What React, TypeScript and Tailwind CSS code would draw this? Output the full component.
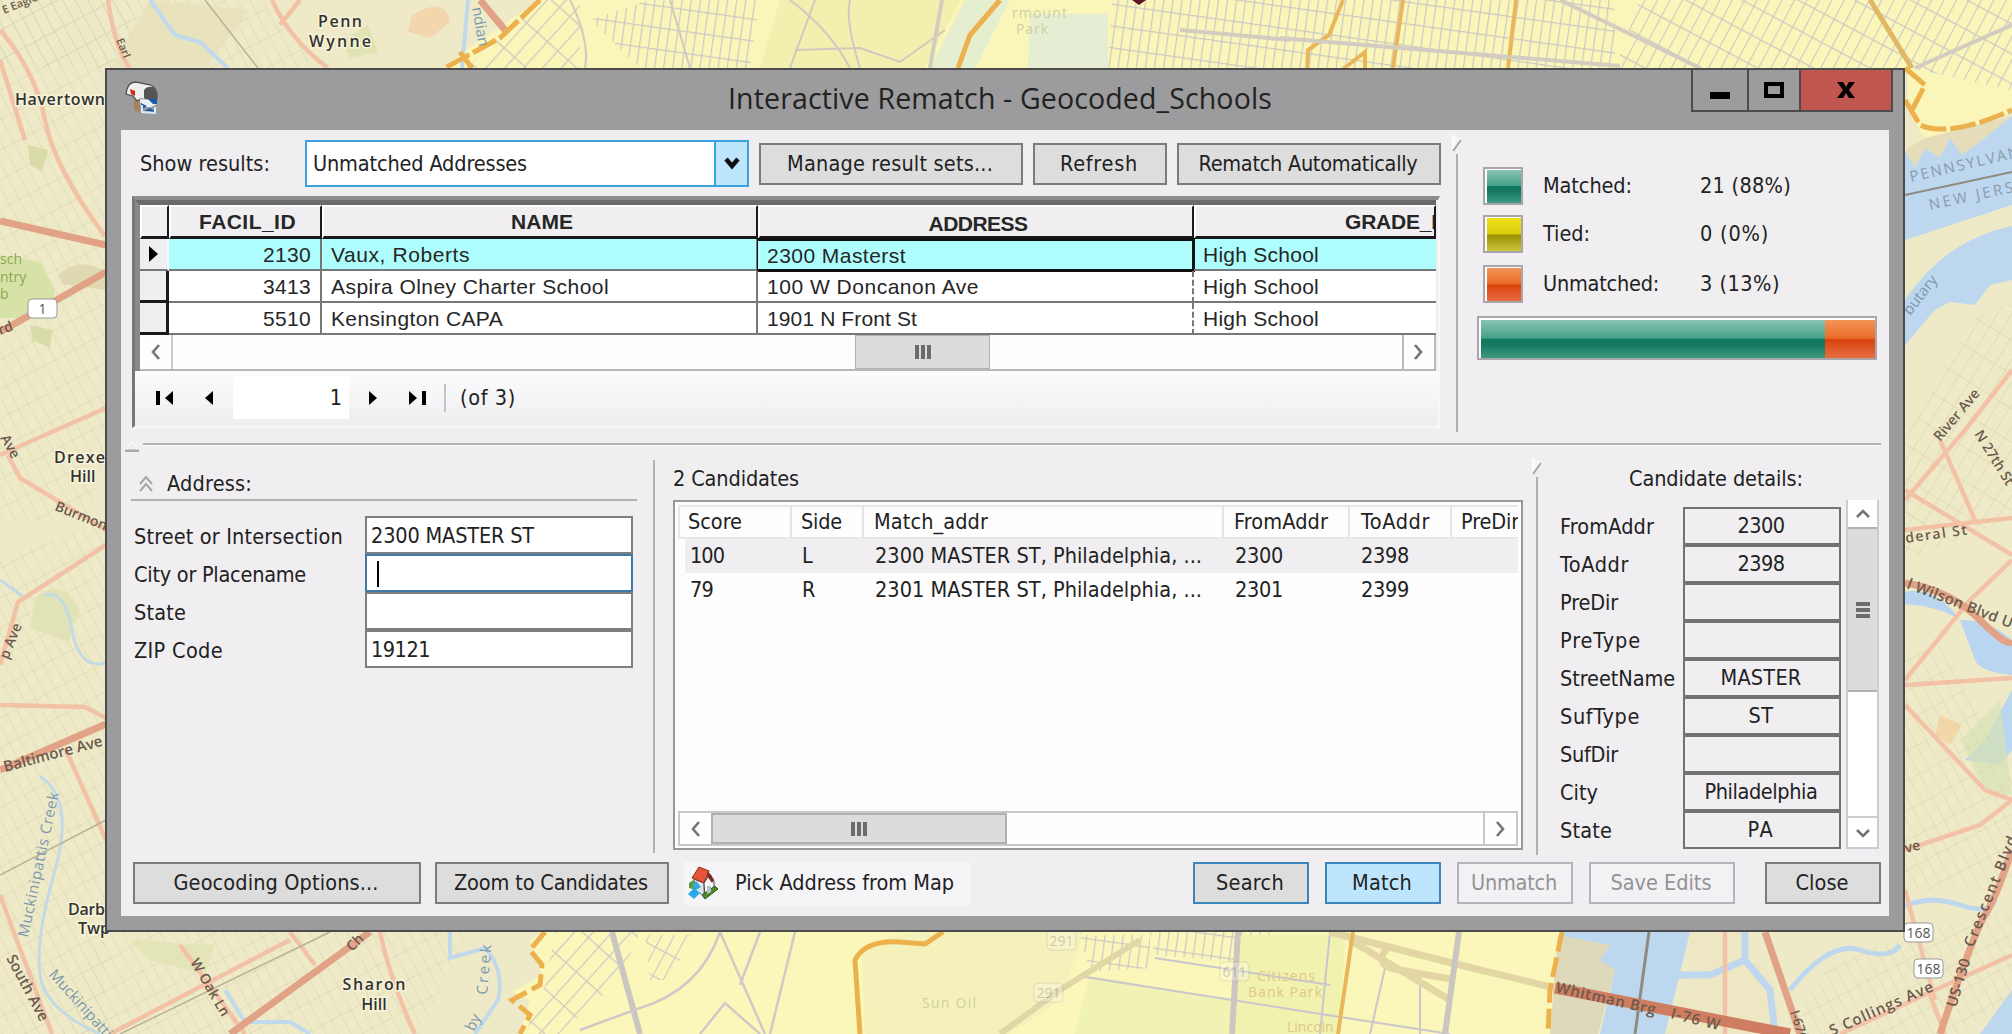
import { useLayoutEffect, useRef } from "react";
import type { ReactNode } from "react";

/* Text run whose tracking is adjusted so that it fills a known width. */
function Fit({ w, children, className = "" }: { w: number; children: string; className?: string }) {
  const ref = useRef<HTMLSpanElement>(null);
  useLayoutEffect(() => {
    const el = ref.current;
    if (!el) return;
    el.style.letterSpacing = "0px";
    const natural = el.getBoundingClientRect().width;
    el.style.letterSpacing = `${(w - natural) / children.length}px`;
  }, [w, children]);
  return (
    <span ref={ref} className={`inline-block shrink-0 whitespace-pre ${className}`}>
      {children}
    </span>
  );
}

const label = "font-['Open_Sans',sans-serif] text-[11px] font-semibold fill-[#6b5a4c]";

function StreetPattern({ id, size, angle, color, w = 1 }: { id: string; size: number; angle: number; color: string; w?: number }) {
  return (
    <pattern id={id} width={size} height={size * 2.4} patternUnits="userSpaceOnUse" patternTransform={`rotate(${angle})`}>
      <path d={`M0 0V${size * 2.4}M0 0H${size}`} stroke={color} strokeWidth={w} fill="none" />
    </pattern>
  );
}

function Shield({ x, y, t }: { x: number; y: number; t: string }) {
  return (
    <g>
      <rect x={x} y={y} width="29" height="19" rx="4" fill="#fff" stroke="#999" />
      <text x={x + 14.5} y={y + 15} textAnchor="middle" className="font-['Open_Sans',sans-serif] text-[14px] fill-[#555]">{t}</text>
    </g>
  );
}

function MapBackground() {
  return (
    <svg className="absolute inset-0" width="2012" height="1034" viewBox="0 0 2012 1034">
      <defs>
        <StreetPattern id="s1" size={11} angle={-28} color="#d6d3af" />
        <StreetPattern id="s2" size={12} angle={32} color="#d3d0aa" />
        <StreetPattern id="s3" size={9} angle={8} color="#cbc8c4" w={2.4} />
        <StreetPattern id="s4" size={14} angle={42} color="#cbc8c4" w={2.4} />
        <StreetPattern id="s5" size={11} angle={28} color="#cbc8c4" w={2.2} />
      </defs>
      <rect width="2012" height="1034" fill="#eeeac8" />
      <path d="M0 0H130V330L90 520H0zM0 560L106 520V1034H0z" fill="url(#s1)" />
      <path d="M100 932H470L420 1034H60zM0 0H260L330 68H0z" fill="url(#s1)" />
      {/* city area */}
      <path d="M540 0H2012V112L1985 122 1925 140 1908 110V68H445L466 50z" fill="#faf6b9" />
      <path d="M545 932H1560L1550 1034H520L530 1000 512 992 542 975 530 940z" fill="#fbf7bb" />
      <path d="M965 0H1010L975 68H930z" fill="#e6eed0" />
      <path d="M780 0H960L925 68H760z" fill="#f3efaf" />
      <path d="M540 0H580V68H466z" fill="url(#s4)" />
      <path d="M590 20L650 0H760L750 68H640z" fill="url(#s3)" />
      <path d="M1030 14H1108V68H1028z" fill="#e5eed2" />
      <path d="M1112 0H1615V68H1108z" fill="url(#s3)" />
      <path d="M1640 0H2012V90L1910 68H1615z" fill="url(#s5)" />
      <path d="M555 932H640L620 980 560 1034H525L545 985z" fill="url(#s4)" />
      <path d="M645 935H690L672 980H650z" fill="url(#s5)" />
      <path d="M862 955Q870 935 940 930H1085L1060 1000 1010 1034H865z" fill="#f5f1ba" />
      <path d="M1080 935H1150V968L1090 972zM1150 932H1270V965L1155 955z" fill="url(#s3)" />
      <path d="M1090 975L1230 1000V1034H1075z" fill="#f0f3b4" />
      <path d="M1240 935H1345L1340 1034H1235z" fill="#f1f1b0" />
      <path d="M1085 977L1340 1017 1450 1034M1155 958L1330 985M1330 932L1320 1034M1385 968L1370 1034M1420 972V1034" stroke="#c9c6cc" strokeWidth="2" fill="none" />
      <path d="M1000 1034L1060 990 1140 940" stroke="#e0d6a6" strokeWidth="6" fill="none" />
      <path d="M1330 932L1460 965 1555 988M1350 940L1450 1000M1390 945Q1370 966 1400 970L1450 979" stroke="#e3d6a4" strokeWidth="7" fill="none" />
      <path d="M1238 932L1232 1034M1459 932L1445 1034M612 932L640 1034" stroke="#cbc6bf" strokeWidth="6" fill="none" />
      <path d="M720 932L765 1034M720 932Q700 990 640 1008L580 1030M795 932L770 1034M700 1034L725 1003 760 1034M760 932L740 985" stroke="#cfc9c8" strokeWidth="2.5" fill="none" />
      <path d="M670 0L690 68M790 0Q830 30 850 68M815 0L790 68M795 50L860 48 900 62 945 30M850 0Q845 20 860 68M570 0Q590 40 585 68" stroke="#cfc9c0" strokeWidth="2" fill="none" />
      {/* parks and relief */}
      <path d="M0 255L40 262 55 290 50 318H0z" fill="#d7e3a6" />
      <path d="M28 145L48 150 42 172 30 165zM30 325L52 330 50 348 32 340z" fill="#d9dca9" />
      <path d="M58 275Q80 255 106 272V290L62 284z" fill="#e0d8b0" />
      <path d="M35 598Q60 575 80 610L68 642 30 628z" fill="#e1e2b6" />
      <path d="M412 15Q445 -5 450 22L430 38 408 32z" fill="#f4d6ae" />
      <path d="M150 0L250 10 205 68H110z" fill="#e8e2bd" />
      <path d="M342 40L368 25 378 52 350 58z" fill="#e1e3b2" />
      <path d="M130 940L215 945 205 975 150 960z" fill="#e3e5b8" />
      {/* water, right side */}
      <path d="M1905 152L1925 140 1985 130 2012 116V205L1905 240z" fill="#bdd7ef" />
      <path d="M1905 150L1915 168 1925 148 1940 158 1950 138 1962 155 1985 138 2012 116 1925 138z" fill="#e5ddba" />
      <path d="M2012 226Q1945 240 1905 300V345L1935 310 1950 302 1975 305 1990 285 2012 280z" fill="#bdd7ef" />
      <path d="M1905 195L2012 172" stroke="#8e8b7f" strokeWidth="2" />
      <path d="M1960 620Q1990 620 2012 640V675Q1980 672 1975 660zM1905 592Q1935 585 1960 620L1945 612Q1925 605 1905 604z" fill="#b9d5f0" />
      <path d="M2012 690L1985 740 1965 760 2000 765 2012 750z" fill="#b9d5f0" />
      <path d="M2000 700L1960 740 1985 790 2012 795z" fill="#d9e3b3" opacity=".7" />
      <path d="M1940 715L1962 725 1950 745 1935 735z" fill="#f5d6a8" />
      <path d="M1560 932H1690L1665 1034H1600L1615 970 1560 960z" fill="#bdd7ef" />
      <path d="M1558 935L1610 945 1600 960 1615 970 1598 1034H1550z" fill="#dfd9bb" />
      <path d="M1690 932H1745V965Q1780 950 1778 1034H1665L1690 980z" fill="#eee7c4" />
      <path d="M1678 975H1710L1745 960 1770 990 1775 1034M1745 932V962" stroke="#bdd7ef" strokeWidth="7" fill="none" />
      <path d="M1790 990Q1830 940 1860 950T1900 945M1905 906Q1930 895 1960 905T1995 900" stroke="#bdd7ef" strokeWidth="5" fill="none" />
      <path d="M1980 1034L2012 990V1034z" fill="#bdd7ef" />
      <path d="M1649 932L1635 1034" stroke="#8e8b7f" strokeWidth="3" />
      <path d="M1905 440L1970 320 2012 300V520L1905 560z" fill="url(#s2)" />
      <path d="M1905 655L1945 645 2012 780V890H1905zM1780 1034L1830 965 1905 935 2012 910V1000L1960 1034z" fill="url(#s1)" />
      {/* creeks, left side */}
      <path d="M0 580L25 598M45 595Q65 590 72 630T106 663M40 776Q75 800 55 870T40 975T100 1034" stroke="#c3dae6" strokeWidth="3" fill="none" />
      <path d="M150 0L175 35 200 42 228 68M468 0L462 68M450 932V958L485 948Q505 970 498 1000L475 1034M225 990L245 1022H290L310 1034" stroke="#c0daec" strokeWidth="4" fill="none" />
      {/* minor highways */}
      <g stroke="#f3c2a6" strokeWidth="4.5" fill="none">
        <path d="M0 30Q35 70 45 120T105 236M0 455L106 408M8 455L20 478 106 530M0 665L18 602 106 545M0 705L85 707 106 718M65 748L106 840M0 895L28 970 52 1034" />
        <path d="M108 0Q115 50 130 68M0 60L25 140M272 0Q290 40 328 68M300 0L280 25M180 945L245 1034M110 1034L290 940M290 932L315 965M380 932Q390 980 415 1034" />
        <path d="M1905 680L1970 600 2012 560M1905 490L2012 555M1905 685L2012 678M1905 530L2012 518M1905 705L1985 790 2012 800M1905 850L1980 825 2012 800M1725 932V1034M1905 890L1935 1000M1905 500L1965 430 2012 370M1940 440L1975 520" />
        <path d="M1840 1034L1935 990 2012 955M1930 995L1945 1034" />
      </g>
      <g stroke="#e2a286" strokeWidth="7" fill="none">
        <path d="M0 221L106 245M0 332L106 272M0 770L106 724M230 1034L370 932M480 0L505 30" />
        <path d="M1905 583Q1950 590 1980 620T2012 640M2012 850Q1995 900 1985 915T1940 1034M1765 932L1800 1034" />
        <path d="M1555 988L1790 1034" stroke="#cf7d60" strokeWidth="11" />
      </g>
      <path d="M205 0L258 68M120 1034L330 932M0 875L106 820" stroke="#b8b29a" strokeWidth="1.5" fill="none" />
      {/* district borders */}
      <g stroke="#ecb04c" fill="none" strokeWidth="5">
        <path d="M540 0L500 38 445 68M460 52L472 68M1905 100L1920 125Q1950 138 2012 110M1905 68L1925 85 1912 110" strokeDasharray="26 4" />
        <path d="M545 932L530 950 542 965 540 985 512 1000 530 1015 520 1034M1562 932L1550 990 1548 1034" strokeDasharray="20 6" />
        <path d="M1000 0L970 35 958 68M860 1034L855 960Q865 940 900 942L925 944 943 932" />
        <path d="M1343 0L1329 35 1308 50 1306 98 1365 52V68M1403 0L1393 68M1516 0L1508 68M1353 932L1338 1034" strokeWidth="4" stroke="#eab65a" />
        <path d="M1870 0L1912 68" stroke="#e0b765" />
      </g>
      <path d="M942 0L930 68M1560 0L1700 68M1280 38L1620 66M2012 25L1915 68M1180 30L1290 40" stroke="#d3ccc0" strokeWidth="4" fill="none" />
      <path d="M1132 0H1146L1139 5z" fill="#5c1620" />
      {/* labels */}
      <g className="font-['Open_Sans',sans-serif] text-[16px] font-semibold fill-[#333] stroke-[#f7f3d8] stroke-[3px] [paint-order:stroke]">
        <text x="340" y="27" textAnchor="middle" textLength="44">Penn</text>
        <text x="340" y="47" textAnchor="middle" textLength="62">Wynne</text>
        <text x="15" y="105" textLength="90">Havertown</text>
        <text x="54" y="463" textLength="51">Drexe</text>
        <text x="70" y="482">Hill</text>
        <text x="68" y="915" textLength="37">Darb</text>
        <text x="78" y="934">Twp</text>
        <text x="374" y="990" textAnchor="middle" textLength="63">Sharon</text>
        <text x="374" y="1010" textAnchor="middle">Hill</text>
      </g>
      <g className={label}>
        <text transform="translate(4 14) rotate(-22)">E Eagle Rd</text>
        <text transform="translate(116 40) rotate(68)">Earl</text>
        <text transform="translate(54 510) rotate(22)" className="text-[14px]">Burmont</text>
        <text transform="translate(5 772) rotate(-15)" className="text-[15px]">Baltimore Ave</text>
        <text transform="translate(8 660) rotate(-68)" className="text-[14px]">p Ave</text>
        <text transform="translate(0 335) rotate(-20)" className="text-[14px]">rd</text>
        <text transform="translate(0 438) rotate(60)" className="text-[14px]">Ave</text>
        <text transform="translate(6 958) rotate(62)" className="text-[15px]">South Ave</text>
        <text transform="translate(190 962) rotate(60)" className="text-[14px]">W Oak Ln</text>
        <text transform="translate(352 952) rotate(-45)" className="text-[14px]">Ch</text>
        <text transform="translate(1940 442) rotate(-50)" className="text-[14px]">River Ave</text>
        <text transform="translate(1974 434) rotate(58)" className="text-[14px]">N 27th St</text>
        <text transform="translate(1906 543) rotate(-8)" className="text-[14px]" textLength="62">deral St</text>
        <text transform="translate(1906 588) rotate(21)" className="text-[15px]" textLength="112">l Wilson Blvd U</text>
        <text transform="translate(1906 853) rotate(-14)" className="text-[14px]">ve</text>
        <text transform="translate(1956 1008) rotate(-73)" className="text-[15px]">US-130</text>
        <text transform="translate(1973 948) rotate(-68)" className="text-[15px]" textLength="118">Crescent Blvd</text>
        <text transform="translate(1832 1036) rotate(-24)" className="text-[15px]" textLength="112">S Collings Ave</text>
        <text transform="translate(1555 992) rotate(13)" className="text-[15px]" textLength="102">Whitman Brg</text>
        <text transform="translate(1670 1018) rotate(14)" className="text-[15px]" textLength="50">I-76 W</text>
        <text transform="translate(1790 1012) rotate(72)" className="text-[13px]">I-676</text>
      </g>
      <g className="font-['Open_Sans',sans-serif] text-[15px] fill-[#7c99ad]">
        <text transform="translate(28 938) rotate(-78)" textLength="148">Muckinipattis Creek</text>
        <text transform="translate(48 975) rotate(48)">Muckinipattis</text>
        <text transform="translate(487 995) rotate(-85)" textLength="50">Creek</text>
        <text transform="translate(474 1032) rotate(-65)">by</text>
        <text transform="translate(472 8) rotate(80)">ndian</text>
        <text transform="translate(1910 316) rotate(-52)">butary</text>
        <text transform="translate(1911 182) rotate(-13)" className="fill-[#899bad]" textLength="112">PENNSYLVAN</text>
        <text transform="translate(1930 210) rotate(-12)" className="fill-[#899bad]" textLength="86">NEW JERS</text>
      </g>
      <g className="font-['Open_Sans',sans-serif] text-[14px] fill-[#8fa659]">
        <text x="0" y="264">sch</text>
        <text x="0" y="282">ntry</text>
        <text x="0" y="299">b</text>
      </g>
      <g className="font-['Open_Sans',sans-serif] text-[14px] fill-[#d0d0a2]">
        <text x="1012" y="18" textLength="55">rmount</text>
        <text x="1016" y="34" textLength="32">Park</text>
        <text x="922" y="1008" textLength="54">Sun Oil</text>
        <text x="1257" y="981" className="fill-[#e0c78a]" textLength="58">Citizens</text>
        <text x="1248" y="997" className="fill-[#e0c78a]" textLength="74">Bank Park</text>
        <text x="1287" y="1032" className="fill-[#e0c78a]">Lincoln</text>
      </g>
      <g opacity=".25">
        <Shield x={1047} y={931} t="291" />
        <Shield x={1034} y={983} t="291" />
        <Shield x={1220} y={962} t="611" />
      </g>
      <Shield x={28} y={299} t="1" />
      <Shield x={1904} y={923} t="168" />
      <Shield x={1914} y={959} t="168" />
    </svg>
  );
}

function MailboxIcon() {
  return (
    <svg width="34" height="34" viewBox="0 0 34 34">
      <path d="M9 17V29L15 32V19z" fill="#a8835c" />
      <path d="M2 8Q4 1 11 1L26 4Q33 8 32 17L30 21 16 18 12 20 8 15 1 13z" fill="#efefef" stroke="#555" strokeWidth="1.3" />
      <path d="M19 17V9Q22 5 28 6 33 10 32 20L22 21z" fill="#555" />
      <path d="M5 8L10 10V15L6 13z" fill="#d1271c" />
      <path d="M15 18L32 19V23L26 26H16z" fill="#e8f1f8" />
      <path d="M23 18H32V23L28 23zM16 22L22 25 16 29zM19 30L25 27 31 31z" fill="#175aa6" />
      <path d="M17 24V31L30 32V26" fill="none" stroke="#dceaf6" strokeWidth="2" />
    </svg>
  );
}

function HouseIcon() {
  return (
    <svg width="32" height="34" viewBox="0 0 32 34">
      <path d="M2 17L8 13 9 24 2 22z" fill="#5b9a3b" />
      <path d="M7 13L17 17V30L8 24z" fill="#d8e5ec" stroke="#777" />
      <path d="M17 17L23 8 27 15V25L18 30z" fill="#fafafa" stroke="#444" />
      <path d="M12 1L22 5 17 17 5 12z" fill="#e75339" stroke="#8b2d1d" />
      <path d="M21 5L27 14 25 17 20 10z" fill="#7c2b20" />
      <path d="M15 29L28 20 31 23 18 33z" fill="#4f8b2c" stroke="#2d5a1b" />
      <path d="M9 15L14 21 9 24 5 20z" fill="#3aa7dc" />
      <path d="M7 22L13 27 7 33 1 28z" fill="#29a9ea" />
      <path d="M20 20H24V26L20 28z" fill="#b7c2c8" />
    </svg>
  );
}

function Chevron({ dir }: { dir: "left" | "right" | "up" | "down" }) {
  const d = { left: "M11 1L5 8 11 15", right: "M4 1L10 8 4 15", up: "M2 11L8 5 14 11", down: "M2 5L8 11 14 5" }[dir];
  return (
    <svg width="16" height="16" viewBox="0 0 16 16">
      <path d={d} fill="none" stroke="#747474" strokeWidth="2.6" />
    </svg>
  );
}

function Grip({ vertical = false }: { vertical?: boolean }) {
  return (
    <div className={`flex gap-[2px] ${vertical ? "flex-col" : ""}`}>
      {[0, 1, 2].map((i) => (
        <div key={i} className={vertical ? "h-[4px] w-[14px] bg-[#6c6c6c]" : "h-[14px] w-[4px] bg-[#6c6c6c]"} />
      ))}
    </div>
  );
}

function Btn({ w, tw, children, kind = "normal", className = "" }: { w: string; tw: number; children: string; kind?: "normal" | "blue" | "hot" | "off"; className?: string }) {
  const look = {
    normal: "border-[#7b7b7b] bg-[#dddddd]",
    blue: "border-[#3d86bb] bg-[#dddddd]",
    hot: "border-[#3d86bb] bg-[#bde6fe]",
    off: "border-[#b3b5b8] bg-[#f2f1f3] text-[#929297]",
  }[kind];
  return (
    <button className={`flex h-[42px] shrink-0 items-center justify-center border-2 pr-[2px] ${w} ${look} ${className}`}>
      <Fit w={tw}>{children}</Fit>
    </button>
  );
}

/* Collapse handle: a small triangle at the head of a vertical rule. */
function VSplit({ className }: { className: string }) {
  return (
    <div className={`flex w-[12px] shrink-0 flex-col items-center ${className}`}>
      <svg width="12" height="18" viewBox="0 0 12 18" className="shrink-0">
        <path d="M2 1V17L11 6" fill="#f6f5f7" stroke="#fff" strokeWidth="1.5" />
        <path d="M2 17L10 6" stroke="#a5a5a8" strokeWidth="2" />
      </svg>
      <div className="mt-[2px] w-[2px] flex-1 bg-[#b0aeb1]" />
    </div>
  );
}

const gridRows = [
  { id: "2130", name: "Vaux, Roberts", nw: 139, addr: "2300 Masterst", aw: 139 },
  { id: "3413", name: "Aspira Olney Charter School", nw: 278, addr: "100 W Doncanon Ave", aw: 212 },
  { id: "5510", name: "Kensington CAPA", nw: 172, addr: "1901 N Front St", aw: 150 },
];

function ResultGrid() {
  const head = "flex h-full items-center bg-[#f0eef1] border-t-2 border-l-2 border-t-white border-l-white border-r-2 border-b-[3px] border-r-[#1a1a1a] border-b-[#1a1a1a] font-bold";
  return (
    <div className="h-[232px] w-[1308px] border-t-[4px] border-l-[3px] border-t-[#8d8d8f] border-l-[#77777a] border-r-2 border-b-2 border-r-[#f8f8f9] border-b-[#f8f8f9]">
      <div className="w-[1301px] border-t-[5px] border-l-[5px] border-t-[#6b6b6d] border-l-[#8a8a8d] font-['Liberation_Sans',sans-serif] text-[21px] text-[#262626]">
        <div className="flex h-[34px]">
          <div className={`${head} w-[29px]`} />
          <div className={`${head} w-[153px] justify-center pl-[4px]`}><Fit w={97}>FACIL_ID</Fit></div>
          <div className={`${head} w-[436px] justify-center pl-[4px]`}><Fit w={62}>NAME</Fit></div>
          <div className={`${head} w-[436px] justify-center pt-1 pl-[4px]`}><Fit w={99}>ADDRESS</Fit></div>
          <div className={`${head} flex-1 overflow-hidden border-r-0 pl-[149px]`}><Fit w={99}>GRADE_L</Fit></div>
        </div>
        {gridRows.map((r, i) => (
          <div key={r.id} className={`flex h-[32px] ${i === 0 ? "bg-[#aefefd]" : "bg-white"}`}>
            <div className={`flex w-[29px] items-center justify-center bg-[#efeef0] ${i ? "border-r-[3px] border-b-[3px] border-[#1a1a1a]" : "border-r-2 border-b-2 border-r-[#fafafa] border-b-[#777]"}`}>
              {i === 0 && <svg width="9" height="16"><path d="M0 0L9 8 0 16z" fill="#000" /></svg>}
            </div>
            <div className="flex w-[153px] items-center justify-end border-r-2 border-b-2 border-[#777] pr-[9px]"><Fit w={48}>{r.id}</Fit></div>
            <div className="flex w-[436px] items-center border-r-2 border-b-2 border-[#777] pl-[9px]"><Fit w={r.nw}>{r.name}</Fit></div>
            <div className={`flex w-[436px] items-center pl-[9px] ${i === 0 ? "border-2 border-l-0 border-[#111] outline-1 outline-[#111]" : "border-r-2 border-b-2 border-b-[#777] border-r-[#777] [border-right-style:dashed]"}`}><Fit w={r.aw}>{r.addr}</Fit></div>
            <div className="flex flex-1 items-center border-b-2 border-[#777] pl-[9px]"><Fit w={116}>High School</Fit></div>
          </div>
        ))}
        <div className="flex h-[36px] border-b-2 border-b-[#b7b7ba] bg-[#fdfdfd]">
          <div className="flex w-[33px] items-center justify-center border-r-2 border-[#c9c9cb]"><Chevron dir="left" /></div>
          <div className="ml-[682px] flex w-[135px] items-center justify-center border border-[#b3b3b3] bg-[#dcdcdc]"><Grip /></div>
          <div className="ml-auto flex w-[34px] items-center justify-center border-x-2 border-[#b9b9bc]"><Chevron dir="right" /></div>
        </div>
      </div>
      <div className="flex h-[54px] items-center bg-gradient-to-b from-[#fcfcfd] to-[#efedf0] pl-[21px]">
        <svg width="18" height="16"><path d="M0 1H4V15H0zM17 1L9 8 17 15z" fill="#000" /></svg>
        <svg width="10" height="16" className="ml-[30px]"><path d="M9 1L1 8 9 15z" fill="#000" /></svg>
        <div className="ml-[19px] flex h-[42px] w-[116px] items-center justify-end bg-white pr-[7px]">1</div>
        <svg width="10" height="16" className="ml-[20px]"><path d="M0 1L8 8 0 15z" fill="#000" /></svg>
        <svg width="17" height="16" className="ml-[30px]"><path d="M0 1L8 8 0 15zM13 1H17V15H13z" fill="#000" /></svg>
        <div className="ml-[18px] h-[28px] w-[2px] bg-[#c4c4c8]" />
        <Fit w={56} className="ml-[14px]">(of 3)</Fit>
      </div>
    </div>
  );
}

const glossGreen = "bg-[linear-gradient(#8cc3b4,#45a188_48%,#0d795d_50%,#16795f_65%,#3c9b83)]";
const glossYellow = "bg-[linear-gradient(#efe21b,#d9cd0c_48%,#9a8e02_52%,#ccc53d)]";
const glossRed = "bg-[linear-gradient(#f39457,#ea6c29_48%,#d9430d_52%,#e76d42)]";

function Legend() {
  const rows = [
    { g: glossGreen, t: "Matched:", tw: 89, v: "21 (88%)", vw: 91, m: "" },
    { g: glossYellow, t: "Tied:", tw: 47, v: "0 (0%)", vw: 69, m: "mt-[9px]" },
    { g: glossRed, t: "Unmatched:", tw: 116, v: "3 (13%)", vw: 80, m: "mt-[11px]" },
  ];
  return (
    <div className="mt-[36px] ml-[14px] w-[402px]">
      {rows.map((r) => (
        <div key={r.t} className={`flex h-[39px] items-center pl-[6px] ${r.m}`}>
          <div className="h-[38px] w-[40px] border-2 border-[#a9a5a8] bg-white pt-px pl-[2px]"><div className={`size-full ${r.g}`} /></div>
          <div className="ml-[20px] w-[157px]"><Fit w={r.tw}>{r.t}</Fit></div>
          <Fit w={r.vw}>{r.v}</Fit>
        </div>
      ))}
      <div className="mt-[13px] flex h-[44px] w-[400px] border-2 border-[#a9a5a8] bg-white pt-[2px] pl-[2px]">
        <div className={`w-[344px] ${glossGreen}`} />
        <div className={`flex-1 ${glossRed}`} />
      </div>
    </div>
  );
}

const fields = [
  { t: "Street or Intersection", w: 209, v: "2300 MASTER ST", vw: 163 },
  { t: "City or Placename", w: 172, v: "", vw: 0 },
  { t: "State", w: 52, v: "", vw: 0 },
  { t: "ZIP Code", w: 89, v: "19121", vw: 59 },
];

function AddressPanel() {
  return (
    <div className="flex w-[534px] shrink-0">
      <div className="ml-[10px] w-[506px]">
        <div className="mt-[17px] flex h-[38px] items-center border-b-2 border-[#b3b1b4] pt-[5px]">
          <svg width="14" height="18" viewBox="0 0 14 18" className="ml-[8px]">
            <path d="M1 9L7 2 13 9M1 16L7 9 13 16" fill="none" stroke="#a5a5a8" strokeWidth="2" />
          </svg>
          <Fit w={85} className="ml-[14px]">Address:</Fit>
        </div>
        <div className="mt-[15px]">
          {fields.map((f, i) => (
            <div key={f.t} className="flex h-[38px] items-center">
              <div className="w-[234px] pt-[3px] pl-[3px]"><Fit w={f.w}>{f.t}</Fit></div>
              <div className={`flex h-[38px] w-[268px] items-center border-2 bg-white pt-[2px] ${i === 1 ? "border-[#3f7ba6]" : "border-[#7e7e80]"}`}>
                {f.v ? <Fit w={f.vw} className="ml-[4px]">{f.v}</Fit> : i === 1 ? <div className="ml-[10px] h-[26px] w-[2px] bg-black" /> : null}
              </div>
            </div>
          ))}
        </div>
      </div>
      <div className="mt-[14px] ml-auto h-[393px] w-[2px] shrink-0 bg-[#b3b1b4]" />
    </div>
  );
}

function Cell({ w, tw, children, cls = "" }: { w: string; tw: number; children?: string; cls?: string }) {
  return <div className={`flex h-full shrink-0 items-center ${w} ${cls}`}>{children ? <Fit w={tw}>{children}</Fit> : null}</div>;
}

function CandidatePanel() {
  const rule = "border-r-2 border-[#e3e2e5]";
  return (
    <div className="ml-[18px] w-[850px] shrink-0">
      <div className="mt-[14px] h-[40px] pt-[8px]"><Fit w={126}>2 Candidates</Fit></div>
      <div className="flex h-[350px] flex-col overflow-hidden border-2 border-[#98989b] bg-[#fdfdfe] px-[3px] pt-[3px] pb-[2px]">
        <div className="flex h-[34px] shrink-0 overflow-hidden border-2 border-r-0 border-[#e7e6e9]">
          <Cell w="w-[112px]" tw={54} cls={`${rule} pl-[8px]`}>Score</Cell>
          <Cell w="w-[72px]" tw={41} cls={`${rule} pl-[9px]`}>Side</Cell>
          <Cell w="w-[360px]" tw={114} cls={`${rule} pl-[10px]`}>Match_addr</Cell>
          <Cell w="w-[126px]" tw={94} cls={`${rule} pl-[10px]`}>FromAddr</Cell>
          <Cell w="w-[102px]" tw={69} cls={`${rule} pl-[11px]`}>ToAddr</Cell>
          <Cell w="w-[70px]" tw={58} cls="pl-[9px]">PreDir</Cell>
        </div>
        {[
          ["100", 34, "L", 11, "2300 MASTER ST, Philadelphia, ...", "2300", "2398"],
          ["79", 23, "R", 14, "2301 MASTER ST, Philadelphia, ...", "2301", "2399"],
        ].map((r, i) => (
          <div key={i} className={`ml-[7px] flex h-[34px] shrink-0 ${i === 0 ? "bg-[#f0eef1]" : ""}`}>
            <Cell w="w-[117px]" tw={r[1] as number} cls="pl-[5px]">{r[0] as string}</Cell>
            <Cell w="w-[73px]" tw={r[3] as number}>{r[2] as string}</Cell>
            <Cell w="w-[360px]" tw={327}>{r[4] as string}</Cell>
            <Cell w="w-[126px]" tw={48}>{r[5] as string}</Cell>
            <Cell w="w-[80px]" tw={48}>{r[6] as string}</Cell>
          </div>
        ))}
        <div className="mt-auto flex h-[35px] shrink-0 border-2 border-[#c8c7ca] bg-[#fefefe]">
          <div className="flex w-[31px] items-center justify-center"><Chevron dir="left" /></div>
          <div className="flex w-[296px] items-center justify-center border-2 border-[#b0b0b2] bg-[#dcdcdc]"><Grip /></div>
          <div className="ml-auto flex w-[33px] items-center justify-center border-l-2 border-[#c8c7ca]"><Chevron dir="right" /></div>
        </div>
      </div>
    </div>
  );
}

const details: [string, number, string, number][] = [
  ["FromAddr", 94, "2300", 47],
  ["ToAddr", 69, "2398", 47],
  ["PreDir", 58, "", 0],
  ["PreType", 81, "", 0],
  ["StreetName", 115, "MASTER", 81],
  ["SufType", 80, "ST", 25],
  ["SufDir", 58, "", 0],
  ["City", 38, "Philadelphia", 113],
  ["State", 52, "PA", 27],
];

function DetailsPanel() {
  return (
    <div className="ml-[17px] w-[320px]">
      <div className="mt-[14px] h-[40px] pt-[8px] pl-[69px]"><Fit w={174}>Candidate details:</Fit></div>
      <div className="flex h-[349px]">
        <div className="w-[281px] pt-[7px]">
          {details.map(([t, w, v, vw]) => (
            <div key={t} className="flex h-[38px] items-center">
              <div className="w-[123px] pt-px"><Fit w={w}>{t}</Fit></div>
              <div className="flex h-full w-[158px] items-center justify-center border-2 border-[#727275] pr-[2px]">{v ? <Fit w={vw}>{v}</Fit> : null}</div>
            </div>
          ))}
        </div>
        <div className="ml-[5px] flex w-[33px] flex-col border-x-2 border-b-2 border-[#cdccd0] bg-white">
          <div className="flex h-[27px] shrink-0 items-center justify-center"><Chevron dir="up" /></div>
          <div className="flex h-[165px] shrink-0 items-center justify-center border-y-2 border-[#b0b0b2] bg-[#dcdcdc]"><Grip vertical /></div>
          <div className="mt-auto flex h-[31px] items-center justify-center border-t-2 border-[#cdccd0]"><Chevron dir="down" /></div>
        </div>
      </div>
    </div>
  );
}

function TitleBar({ children }: { children: ReactNode }) {
  return (
    <div className="relative flex h-[60px] shrink-0 items-center justify-center font-['Open_Sans',sans-serif] text-[28.5px] text-[#222]">
      <div className="absolute top-[11px] left-[18px]"><MailboxIcon /></div>
      <div className="mr-[10px] pb-[3px]">{children}</div>
      <div className="absolute -top-[2px] right-[10px] flex h-[44px] border-2 border-[#4c4c4c]">
        <div className="flex w-[56px] justify-center border-r-2 border-[#4c4c4c] pt-[22px]"><div className="h-[7px] w-[20px] bg-black" /></div>
        <div className="flex w-[52px] justify-center border-r-2 border-[#4c4c4c] pt-[12px]"><div className="h-[16px] w-[20px] border-4 border-black" /></div>
        <div className="flex w-[90px] justify-center bg-[#c1564e] pt-[12px]">
          <svg width="18" height="16"><path d="M0 0H6L9 5 12 0H18L12 8 18 16H12L9 11 6 16H0L6 8z" fill="#000" /></svg>
        </div>
      </div>
    </div>
  );
}

export default function App() {
  return (
    <div className="relative h-[1034px] w-[2012px] overflow-hidden bg-[#eeeac8]">
      <MapBackground />
      <div className="absolute top-[68px] left-[105px] flex h-[864px] w-[1800px] flex-col border-2 border-[#4b4b4b] bg-[#9c9b9d] font-['DejaVu_Sans_Condensed','DejaVu_Sans',sans-serif] text-[21.5px] leading-none text-[#222]">
        <TitleBar><Fit w={544}>Interactive Rematch - Geocoded_Schools</Fit></TitleBar>
        <div className="ml-[14px] flex h-[786px] w-[1768px] flex-col bg-[#f0eef1]">
          <div className="flex h-[308px] shrink-0">
            <div className="w-[1330px] shrink-0 pl-[11px]">
              <div className="flex h-[66px] items-center pt-px">
                <Fit w={130} className="ml-[8px]">Show results:</Fit>
                <div className="ml-[35px] flex h-[47px] w-[444px] shrink-0 items-center border-2 border-[#3aa3db] bg-white">
                  <Fit w={214} className="ml-[6px]">Unmatched Addresses</Fit>
                  <div className="ml-auto flex h-full w-[33px] items-center justify-center border-l-2 border-[#3aa3db] bg-[#bde6fe]">
                    <svg width="16" height="14"><path d="M2 2L8 9 14 2" fill="none" stroke="#111" strokeWidth="4.5" /></svg>
                  </div>
                </div>
                <Btn w="w-[264px]" tw={206} className="ml-[10px]">Manage result sets...</Btn>
                <Btn w="w-[134px]" tw={78} className="ml-[10px]">Refresh</Btn>
                <Btn w="w-[264px]" tw={219} className="ml-[10px]">Rematch Automatically</Btn>
              </div>
              <ResultGrid />
            </div>
            <VSplit className="mt-[4px] mb-[6px]" />
            <Legend />
          </div>
          <div className="flex h-[14px] shrink-0 items-start pl-[4px]">
            <svg width="14" height="14"><path d="M1 12L7 3 13 12z" fill="#eeecef" stroke="#fff" /><path d="M0 13H14" stroke="#a9a7aa" strokeWidth="3" /></svg>
            <div className="mt-[5px] ml-[4px] h-[3px] w-[1738px] border-b border-b-white bg-[#b3b1b4]" />
          </div>
          <div className="-mt-[6px] flex h-[416px] shrink-0">
            <AddressPanel />
            <CandidatePanel />
            <VSplit className="mt-[11px] mb-[7px] ml-[8px]" />
            <DetailsPanel />
          </div>
          <div className="flex h-[42px] shrink-0 items-center pl-[12px]">
            <Btn w="w-[288px]" tw={205}>Geocoding Options...</Btn>
            <Btn w="w-[234px]" tw={194} className="ml-[14px]">Zoom to Candidates</Btn>
            <div className="ml-[15px] flex h-[43px] w-[287px] shrink-0 items-center bg-[#f5f4f6] pl-[3px]">
              <HouseIcon />
              <Fit w={219} className="ml-[16px]">Pick Address from Map</Fit>
            </div>
            <Btn w="w-[116px]" tw={68} kind="blue" className="ml-[222px]">Search</Btn>
            <Btn w="w-[116px]" tw={60} kind="hot" className="ml-[16px]">Match</Btn>
            <Btn w="w-[116px]" tw={86} kind="off" className="ml-[16px]">Unmatch</Btn>
            <Btn w="w-[146px]" tw={101} kind="off" className="ml-[16px]">Save Edits</Btn>
            <Btn w="w-[116px]" tw={53} className="ml-[30px]">Close</Btn>
          </div>
        </div>
      </div>
    </div>
  );
}
